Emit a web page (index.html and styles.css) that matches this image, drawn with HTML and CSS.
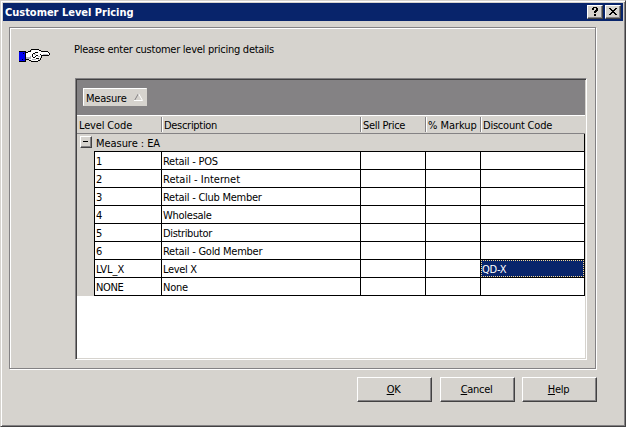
FILE: index.html
```html
<!DOCTYPE html>
<html lang="en">
<head>
<meta charset="utf-8">
<title>Customer Level Pricing</title>
<link rel="stylesheet" href="styles.css">
</head>
<body>
<div class="window">
  <header class="titlebar">
    <h1>Customer Level Pricing</h1>
    <button class="tb" aria-label="Help"><svg width="6" height="9" viewBox="0 0 6 9" shape-rendering="crispEdges"><path d="M1 0h4v1h1v3H5v1H4v1H2V4h1V3h1V1H2v2H0V1h1zM2 7h2v2H2z"/></svg></button>
    <button class="tb close" aria-label="Close"><svg width="8" height="7" viewBox="0 0 8 7" shape-rendering="crispEdges"><path d="M0 0h2v1h1v1h2V1h1V0h2v1H7v1H6v1H5v1h1v1h1v1h1v1H6V6H5V5H3v1H2v1H0V6h1V5h1V4h1V3H2V2H1V1H0z"/></svg></button>
  </header>
  <main class="group">
    <svg class="hand" width="32" height="14" viewBox="0 0 32 14" shape-rendering="crispEdges">
      <path fill="#000" d="M0 2h7v11H0z"/>
      <path fill="#0000f0" d="M0 3h6v9H0z"/>
      <path fill="#fff" d="M7 4h2V3h2V2h2V1h7v1h3v1h6v1h2v2h-9v2h-1v2h-2v2h-6v-1H7z"/>
      <path fill="#000" d="M7 3h2v1H7zM9 2h3v1H9zM12 0h8v1h-8zM11 1h1v1h-1zM20 1h2v1h-2zM22 2h7v1h-7zM29 3h1v1h-1zM30 4h1v2h-1zM22 6h8v1h-8zM21 5h1v1h-1zM22 7h1v2h-1zM21 9h1v2h-1zM19 11h2v1h-2zM12 12h7v1h-7zM10 11h2v1h-2zM7 10h3v1H7z"/>
      <path fill="#000" d="M16 3h3v1h-3zM14 4h2v1h-2zM13 5h1v3h-1zM14 8h2v1h-2zM16 7h1v1h-1zM17 6h2v1h-2zM17 9h3v1h-3zM4 4h1v1H4zM3 10h1v1H3z"/>
      <path fill="#b4b4bc" d="M7 8h4v2H7zM15 5h2v1h-2zM24 5h5v1h-5zM13 10h4v1h-4zM11 7h1v3h-1zM19 7h2v1h-2z"/>
    </svg>
    <div class="content">
      <p class="prompt">Please enter customer level pricing details</p>
      <div class="grid">
        <div class="groupby"><span class="chip">Measure<svg width="9" height="8" viewBox="0 0 9 8"><path d="M4.5.5L.5 7.5" stroke="#848284"/><path d="M4.5.5l4 7H0" fill="none" stroke="#fff"/></svg></span></div>
        <div class="row head">
          <span class="lc">Level Code</span><span class="ds">Description</span><span class="sp">Sell Price</span><span class="mk">% Markup</span><span class="dc">Discount Code</span>
        </div>
        <div class="section"><i class="minus"></i><span>Measure : EA</span></div>
        <div class="rows">
          <div class="row"><span>1</span><span>Retail - POS</span><span></span><span></span><span></span></div>
          <div class="row"><span>2</span><span class="wide">Retail - Internet</span><span></span><span></span><span></span></div>
          <div class="row"><span>3</span><span>Retail - Club Member</span><span></span><span></span><span></span></div>
          <div class="row"><span>4</span><span>Wholesale</span><span></span><span></span><span></span></div>
          <div class="row"><span>5</span><span class="tight">Distributor</span><span></span><span></span><span></span></div>
          <div class="row"><span>6</span><span>Retail - Gold Member</span><span></span><span></span><span></span></div>
          <div class="row"><span class="wide">LVL_X</span><span class="tight">Level X</span><span></span><span></span><span class="selected">QD-X</span></div>
          <div class="row"><span class="tight">NONE</span><span>None</span><span></span><span></span><span></span></div>
        </div>
      </div>
    </div>
  </main>
  <footer class="actions">
    <button class="ok"><u>O</u>K</button><button class="cancel"><u>C</u>ancel</button><button><u>H</u>elp</button>
  </footer>
</div>
</body>
</html>
```
FILE: styles.css
```css
* { box-sizing: border-box; }
body { margin: 0; font: 11px/13px "DejaVu Sans Condensed", "DejaVu Sans", sans-serif; letter-spacing: -.26px; color: #000; }
button { font: inherit; letter-spacing: inherit; color: inherit; background: #d6d3ce; border: 1px solid; border-color: #fff #424142 #424142 #fff; box-shadow: inset -1px -1px #848284; padding: 0; border-radius: 0; }
.window { width: 626px; height: 427px; background: #d6d3ce; border: 1px solid; border-color: #d6d3ce #424142 #424142 #d6d3ce; box-shadow: inset 1px 1px #fff, inset -1px -1px #848284; padding: 2px; }
.titlebar { height: 18px; background: #08246b; color: #fff; display: flex; align-items: center; padding: 0 2px; width: 620px; }
h1 { flex: 1; margin: 0; padding-top: 2px; font: bold 11px/16px "DejaVu Sans Condensed", sans-serif; letter-spacing: -.02px; }
.tb { width: 16px; height: 14px; display: flex; align-items: center; justify-content: center; }
.tb svg { margin: -1px 0 0 -1px; }
.close { margin-left: 2px; }
.group { display: flex; margin: 6px 0 0 6px; width: 587px; height: 342px; border: 1px solid #848284; box-shadow: 1px 1px #fff, inset 1px 1px #fff; }
.hand { flex: none; margin: 21px 0 0 9px; }
.content { margin-left: 24px; padding-top: 14px; }
.prompt { margin: 0 0 22px -1px; padding-top: 1px; height: 14px; }
.grid { width: 512px; height: 282px; background: #fff; border: 1px solid; border-color: #848284 #fff #fff #848284; box-shadow: inset 1px 1px #424142, inset -1px -1px #d6d3ce; padding: 1px; }
.groupby { height: 35px; background: #848284; padding: 8px 6px; }
.chip { display: flex; align-items: center; gap: 7px; width: 64px; height: 18px; padding: 2px 0 0 2px; background: #d6d3ce; border: 1px solid; border-color: #fff #d6d3ce #d6d3ce #fff; letter-spacing: -.2px; }
.chip svg { margin-top: -2px; }
.row { display: grid; height: 18px; white-space: nowrap; }
.head { grid-template-columns: 84px 199px 65px 55px 105px; height: 19px; background: #d6d3ce; border: solid; border-width: 1px 0; border-color: #fff transparent #848284; padding-top: 1px; }
.head span { height: 15px; line-height: 17px; padding-left: 3px; border-left: 1px solid #848284; box-shadow: inset 1px 0 #fff; }
.head .lc { padding-left: 2px; border: 0; box-shadow: none; letter-spacing: -.15px; }
.head .ds { letter-spacing: -.3px; padding-left: 2px; }
.head .sp { padding-left: 2px; letter-spacing: -.3px; }
.head .mk { padding-left: 2px; letter-spacing: -.05px; }
.head .dc { padding-left: 2px; letter-spacing: -.22px; }
.section { display: flex; width: 508px; height: 18px; background: #d6d3ce; border-right: 1px solid #000; letter-spacing: -.05px; line-height: 20px; padding-left: 3px; }
.minus { width: 12px; height: 12px; margin: 2px 4px 0 0; border: 1px solid; border-color: #fff #424142 #424142 #fff; box-shadow: inset -1px -1px #848284; display: grid; place-items: center; }
.minus::after { content: ""; width: 5px; height: 1px; background: #000; margin: -1px 0 0 -1px; }
.rows { width: 508px; margin-top: -1px; border-left: 17px solid #d6d3ce; background: #000; padding: 1px 1px 0 1px; }
.rows .row { grid-template-columns: 66px 198px 64px 54px 103px; gap: 1px; padding-bottom: 1px; }
.rows .row span { background: #fff; padding-left: 1px; line-height: 20px; height: 17px; }
.rows .row .selected { background: #08246b; color: #fff; outline: 1px dotted #f7db94; outline-offset: -1px; }
.rows .row .wide { letter-spacing: 0; }
.rows .row .tight { letter-spacing: -.35px; }
.actions { display: flex; margin: 8px 0 0 354px; }
.actions button { width: 75px; height: 25px; margin-right: 7px; padding-right: 2px; letter-spacing: -.3px; }
.actions .ok { margin-right: 8px; }
u { text-underline-offset: 1px; text-decoration-thickness: 1px; }
```
